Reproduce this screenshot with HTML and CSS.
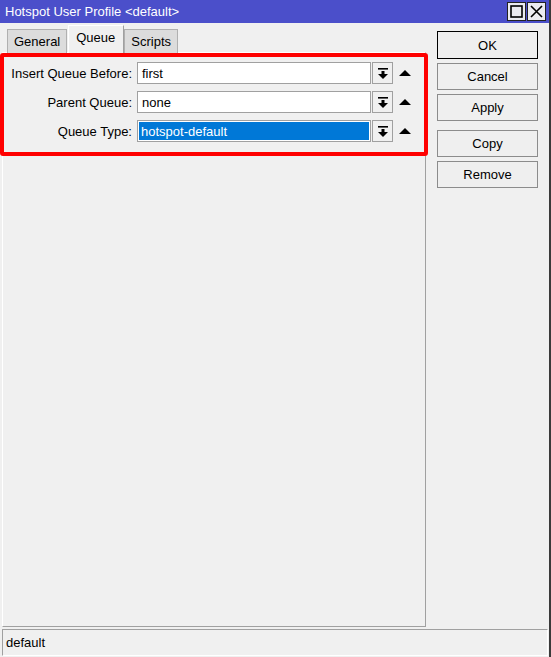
FILE: index.html
```html
<!DOCTYPE html>
<html lang="en">
<head>
    <meta charset="UTF-8">
    <title>Hotspot User Profile &lt;default&gt;</title>
    <link rel="stylesheet" href="styles.css">
</head>
<body>
    <div class="window">
        <div class="titlebar">
            <span class="title">Hotspot User Profile &lt;default&gt;</span>
            <div class="title-buttons">
                <div class="title-btn">
                    <svg width="13" height="13" viewBox="0 0 13 13"><rect x="1" y="1" width="11" height="11" fill="none" stroke="#000" stroke-width="1.6"/></svg>
                </div>
                <div class="title-btn">
                    <svg width="13" height="13" viewBox="0 0 13 13"><path d="M1 1L12 12M12 1L1 12" stroke="#000" stroke-width="1.6"/></svg>
                </div>
            </div>
        </div>

        <div class="body">
            <div class="main">
                <div class="tabs">
                    <div class="tab">General</div>
                    <div class="tab active">Queue</div>
                    <div class="tab">Scripts</div>
                </div>
                <div class="panel">
                    <div class="form">
                        <label>Insert Queue Before:</label>
                        <div class="field">first</div>
                        <div class="drop"><svg width="10" height="11" viewBox="0 0 10 11"><rect x="0" y="0" width="10" height="1.6"/><rect x="3.5" y="3" width="3" height="3.5"/><path d="M0 6H10L5 11Z"/></svg></div>
                        <div class="up"></div>

                        <label>Parent Queue:</label>
                        <div class="field">none</div>
                        <div class="drop"><svg width="10" height="11" viewBox="0 0 10 11"><rect x="0" y="0" width="10" height="1.6"/><rect x="3.5" y="3" width="3" height="3.5"/><path d="M0 6H10L5 11Z"/></svg></div>
                        <div class="up"></div>

                        <label>Queue Type:</label>
                        <div class="field selected"><span>hotspot-default</span></div>
                        <div class="drop"><svg width="10" height="11" viewBox="0 0 10 11"><rect x="0" y="0" width="10" height="1.6"/><rect x="3.5" y="3" width="3" height="3.5"/><path d="M0 6H10L5 11Z"/></svg></div>
                        <div class="up"></div>
                    </div>
                </div>
                <!-- highlight frame around the queue fields -->
                <div class="highlight"></div>
            </div>

            <div class="side">
                <button class="btn default">OK</button>
                <button class="btn">Cancel</button>
                <button class="btn">Apply</button>
                <button class="btn spaced">Copy</button>
                <button class="btn">Remove</button>
            </div>
        </div>

        <div class="status">default</div>
    </div>
</body>
</html>
```

FILE: styles.css
```css
* {
    box-sizing: border-box;
}
body {
    margin: 0;
    font-family: 'Liberation Sans', Arial, sans-serif;
    font-size: 13px;
    color: #000;
    background-color: #f0f0f0;
}
.window {
    width: 551px;
    height: 657px;
    border-right: 2px solid #3a3a3a;
    background-color: #f0f0f0;
    display: flex;
    flex-direction: column;
}
.titlebar {
    height: 23px;
    background-color: #4b4fca;
    color: #fff;
    display: flex;
    align-items: center;
    justify-content: space-between;
    padding: 0 3px 0 5px;
}
.title {
    font-size: 13px;
}
.title-buttons {
    display: flex;
    gap: 1px;
}
.title-btn {
    width: 19px;
    height: 19px;
    background-color: #ebebf0;
    border: 1px solid #222;
    display: flex;
    align-items: center;
    justify-content: center;
}
.body {
    flex: 1;
    display: flex;
}
.main {
    position: relative;
    width: 426px;
    padding: 3px 0 2px 2px;
    display: flex;
    flex-direction: column;
}
.tabs {
    display: flex;
    align-items: flex-end;
    height: 27px;
    padding-left: 5px;
    margin-bottom: -1px;
    position: relative;
    z-index: 1;
}
.tab {
    height: 24px;
    padding: 0 6px;
    background-color: #dcdcdc;
    border: 1px solid #b0b0b0;
    border-bottom: none;
    display: flex;
    align-items: center;
}
.tab + .tab {
    margin-left: 1px;
}
.tab.active {
    height: 28px;
    padding: 0 8px 4px 7px;
    background-color: #f0f0f0;
    border-color: #fff #a0a0a0 #f0f0f0 #fff;
}
.tab.active + .tab {
    margin-left: 0;
}
.panel {
    flex: 1;
    border: 1px solid #a0a0a0;
    border-left-color: #fff;
    border-top-color: #fff;
    padding-top: 9px;
}
.form {
    display: grid;
    grid-template-columns: 129px 234px 22px 24px;
    grid-auto-rows: 22px;
    column-gap: 5px;
    row-gap: 7px;
    align-items: center;
}
.form label {
    text-align: right;
}
.field {
    height: 22px;
    border: 1px solid #a0a0a0;
    background-color: #fff;
    padding: 0 4px;
    display: flex;
    align-items: center;
}
.field.selected {
    padding: 1px;
}
.field.selected span {
    flex: 1;
    height: 100%;
    background-color: #0078d7;
    color: #fff;
    padding: 0 2px;
    display: flex;
    align-items: center;
}
.drop {
    width: 21px;
    height: 22px;
    margin-left: -4px;
    border: 1px solid #a0a0a0;
    background-color: #f0f0f0;
    display: flex;
    align-items: center;
    justify-content: center;
}
.up {
    width: 0;
    height: 0;
    margin-left: -4px;
    margin-bottom: 1px;
    border-left: 6px solid transparent;
    border-right: 6px solid transparent;
    border-bottom: 6px solid #000;
}
.highlight {
    position: absolute;
    left: 0;
    top: 30px;
    width: 428px;
    height: 103px;
    border: 4px solid #ff0000;
    border-radius: 3px;
    z-index: 2;
}
.side {
    flex: 1;
    padding: 8px 0 0 11px;
    display: flex;
    flex-direction: column;
    gap: 4px;
}
.btn {
    width: 101px;
    height: 27px;
    font-family: inherit;
    font-size: 13px;
    color: #000;
    background-color: #efefef;
    border: 1px solid #8c8c8c;
    padding: 0;
}
.btn.default {
    height: 28px;
    border-color: #000;
}
.btn.spaced {
    margin-top: 5px;
}
.status {
    height: 27px;
    margin: 0 1px 1px 2px;
    border: 1px solid #a0a0a0;
    border-right-color: #fff;
    border-bottom-color: #fff;
    padding: 0 3px;
    display: flex;
    align-items: center;
}
```
